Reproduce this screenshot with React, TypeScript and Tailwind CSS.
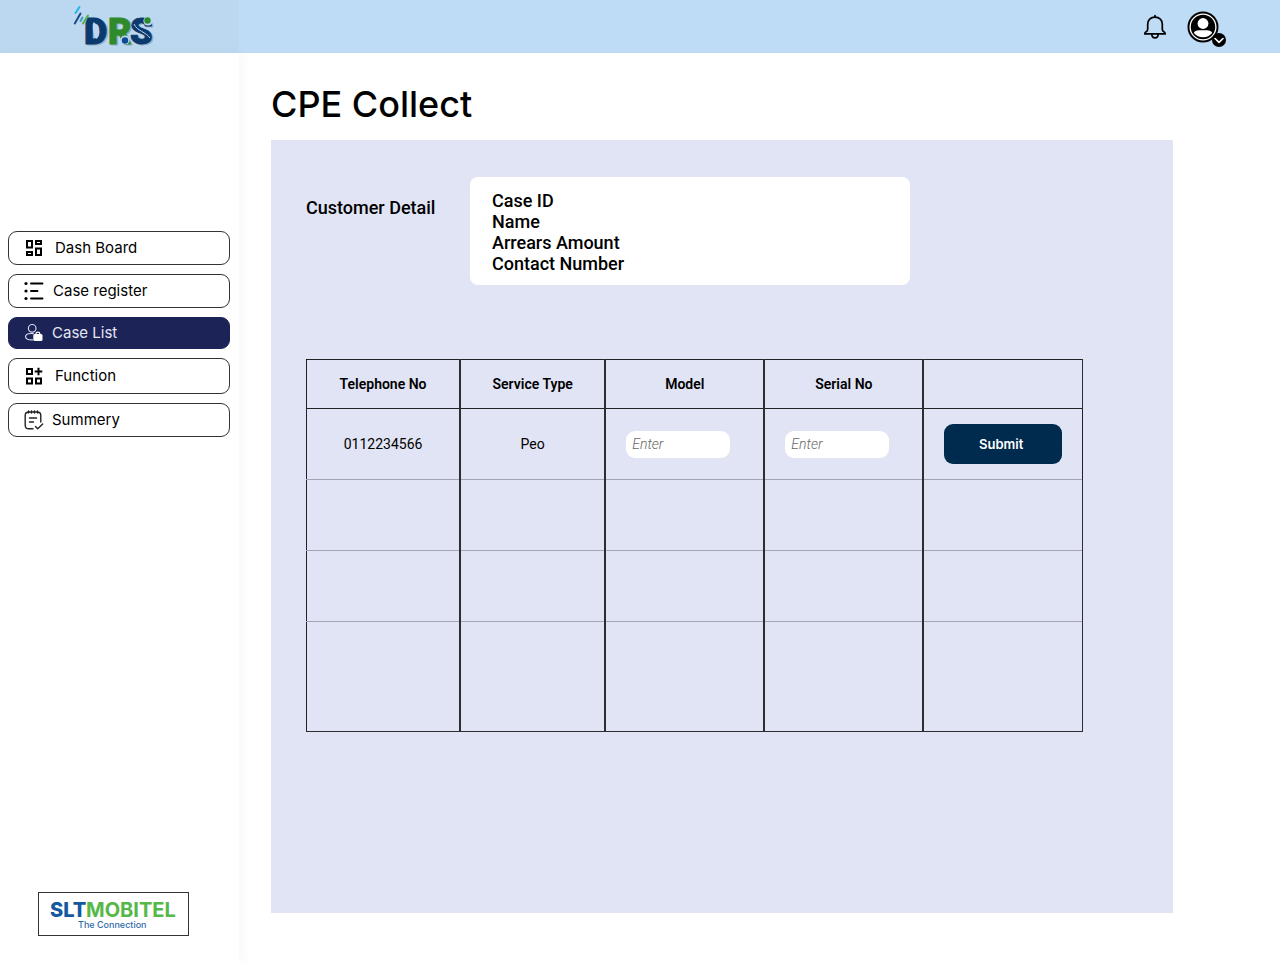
import type { ReactNode } from "react";

function BrandLogo() {
  return (
    <svg width="92" height="53" viewBox="0 0 92 53" role="img" aria-label="DRS">
      <g fontFamily="Roboto, 'Liberation Sans', sans-serif" fontWeight="900" fontSize="36" strokeWidth="1" strokeLinejoin="round">
        <g fill="#8ba0b3" stroke="#8ba0b3" opacity="0.7">
          <text x="12.500" y="45">D</text>
          <text x="36.500" y="45">R</text>
          <text x="58.500" y="45">S</text>
        </g>
        <text x="11" y="43.500" fill="#0b3a6e" stroke="#0b3a6e">D</text>
        <text x="35" y="43.500" fill="#2f8a2c" stroke="#2f8a2c">R</text>
        <text x="57" y="43.500" fill="#0b3a6e" stroke="#0b3a6e">S</text>
      </g>
      <path d="M20.500 22c6 4 8 12 3 17-2-4-5-9-3-17Z" fill="#bcd8f0" />
      <path d="M9.500 14h6.500l-3.500 8.500-3 2Z" fill="#bcd8f0" />
      <path d="M61 24c3 7 12 8 16 14" stroke="#bcd8f0" strokeWidth="1" fill="none" />
      <circle cx="52" cy="40" r="4.600" fill="#bcd8f0" />
      <circle cx="52" cy="40.500" r="3.200" fill="#0b4a94" />
      <circle cx="75" cy="21" r="4.600" fill="#bcd8f0" />
      <circle cx="74.500" cy="20.500" r="3.200" fill="#2f8a2c" />
      <g strokeWidth="2" strokeLinecap="round" fill="none">
        <path d="M2.500 13 6.500 7" stroke="#1db4ea" />
        <path d="M1.800 23.500 7.500 13.500" stroke="#1b4b86" />
        <path d="M7.500 21 9.500 17.500" stroke="#3fa0c8" />
        <path d="M10 23.500 15 15.500" stroke="#58ad4b" />
      </g>
    </svg>
  );
}

function BellIcon() {
  return (
    <svg width="24" height="26" viewBox="0 0 24 26" fill="none" stroke="#000" strokeWidth="1.700" strokeLinejoin="round" strokeLinecap="round">
      <path d="M12 1.500v1.700" />
      <path d="M12 3.200c-4.500 0-7.300 3-7.300 7v5c0 1.300-.6 2-1.600 2.600-.9.500-1.300 1-1.300 2.100h20.400c0-1.100-.4-1.600-1.300-2.100-1-.6-1.600-1.300-1.600-2.600v-5c0-4-2.800-7-7.300-7Z" />
      <path d="M8.800 20c0 2.400 1.300 3.900 3.200 3.900s3.200-1.500 3.200-3.900" />
    </svg>
  );
}

function AccountIcon() {
  return (
    <svg width="40" height="38" viewBox="0 0 40 38">
      <circle cx="16" cy="17" r="15.500" fill="#000" />
      <circle cx="16" cy="17" r="12.900" fill="none" stroke="#fff" strokeWidth="1.300" />
      <circle cx="16" cy="13.500" r="5.400" fill="#fff" />
      <path d="M6.800 23c.6-1.800 2.700-2.700 5-2.700h8.400c2.300 0 4.400.9 5 2.700a12 12 0 0 1-18.400 0Z" fill="#fff" />
      <circle cx="32" cy="30" r="7" fill="#000" />
      <path d="m28 28.500 4 3.800 4-3.800" fill="none" stroke="#fff" strokeWidth="1.600" strokeLinecap="round" strokeLinejoin="round" />
    </svg>
  );
}

function DashboardIcon() {
  return (
    <svg width="20" height="20" viewBox="0 0 20 20" fill="none" stroke="#000" strokeWidth="2">
      <path d="M3 3h5v6.500H3zM12 3h5v3h-5zM12 10.500h5V17h-5zM3 14h5v3H3z" />
    </svg>
  );
}

function ListIcon() {
  return (
    <svg width="20" height="20" viewBox="0 0 20 20" stroke="#000" strokeWidth="1.900" strokeLinecap="round">
      <path d="M7 2.500h11.500M7 10h6.500M7 17.500h11.500" />
      <g stroke="none">
        <circle cx="2" cy="2.500" r="1.600" />
        <circle cx="2" cy="10" r="1.600" />
        <circle cx="2" cy="17.500" r="1.600" />
      </g>
    </svg>
  );
}

function UserCaseIcon() {
  return (
    <svg width="20" height="20" viewBox="0 0 20 20" fill="none" stroke="#d5d7ee" strokeWidth="1.200">
      <circle cx="8.200" cy="5.300" r="3.800" />
      <path d="M8.500 16.800c-4 .2-7-.7-7-3 0-2 2.200-3.300 5.500-3.300 1 0 1.700.1 2.300.2" strokeLinecap="round" />
      <rect x="9.300" y="11" width="9.200" height="7" rx="1.500" fill="#fff" stroke="none" />
      <path d="M12 11.200v-.8c0-.8.6-1.200 1.900-1.200s1.900.4 1.900 1.200v.8" stroke="#fff" />
    </svg>
  );
}

function FunctionIcon() {
  return (
    <svg width="20" height="20" viewBox="0 0 20 20" fill="none" stroke="#000" strokeWidth="2">
      <path d="M3 3h5v5H3zM3 12.500h5v5H3zM12 12.500h5v5h-5zM14.500 1.700v7.600M10.700 5.500h7.600" />
    </svg>
  );
}

function NotesIcon() {
  return (
    <svg width="20" height="20" viewBox="0 0 20 20" fill="none" stroke="#222" strokeWidth="1.400" strokeLinecap="round" strokeLinejoin="round">
      <path d="M9 18.800H5c-2.600 0-3.800-1.200-3.800-3.800V5.500C1.200 3 2.400 2 5 2h8c2.600 0 3.800 1 3.800 3.500V12" />
      <path d="M4.500 1v2M7.500 1v2M10.500 1v2M13.500 1v2M5.500 8h7M5.500 12h4" />
      <path d="m11.500 16.500 2.200 2.200 5-4.700" />
    </svg>
  );
}

type NavItem = {
  label: string;
  icon: ReactNode;
  frame: string;
  active?: boolean;
};

const navItems: NavItem[] = [
  { label: "Dash Board", icon: <DashboardIcon />, frame: "h-[34px] gap-[11px] border-black/80 text-black" },
  { label: "Case register", icon: <ListIcon />, frame: "h-[34px] gap-[9px] border-black/80 text-black" },
  { label: "Case List", icon: <UserCaseIcon />, frame: "h-8 gap-2 border-[#1c2357] bg-[#1c2357] text-[#e6e7f3]", active: true },
  { label: "Function", icon: <FunctionIcon />, frame: "h-9 gap-[11px] border-black/80 text-black" },
  { label: "Summery", icon: <NotesIcon />, frame: "h-[34px] gap-2 border-black/80 text-black" },
];

const customerFields = ["Case ID", "Name", "Arrears Amount", "Contact Number"];
const headings = ["Telephone No", "Service Type", "Model", "Serial No", ""];
const emptyRows = ["h-[71px]", "h-[71px]", "h-[110px]"];

function EntryInput({ label }: { label: string }) {
  return (
    <input
      type="text"
      aria-label={label}
      placeholder="Enter"
      className="block h-[27px] w-[104px] rounded-[9px] bg-white px-[6px] text-sm text-black outline-none placeholder:font-light placeholder:text-[#666] placeholder:italic"
    />
  );
}

function Sidebar() {
  return (
    <aside className="flex w-[239px] shrink-0 flex-col bg-white px-2 pt-[178px] pb-[27px] shadow-[4px_0_12px_rgba(0,0,0,0.03)]">
      <nav aria-label="Main" className="flex flex-col gap-[9px] pr-px font-[Inter,sans-serif] text-[15px]">
        {navItems.map((item) => (
          <a
            key={item.label}
            href="#"
            aria-current={item.active ? "page" : undefined}
            className={`flex items-center rounded-[9px] border pl-[15px] ${item.frame}`}
          >
            {item.icon}
            {item.label}
          </a>
        ))}
      </nav>
      <div className="mt-auto ml-[30px] flex h-11 w-[151px] items-center justify-center border border-black/80">
        <svg width="136" height="40" viewBox="0 0 136 40" role="img" aria-label="SLT Mobitel, The Connection">
          <g fontFamily="Inter, sans-serif" fontWeight="800" fontSize="20">
            <text x="4" y="23" fill="#1459a0">SLT</text>
            <text x="40" y="23" fill="#55b948" fontWeight="700">MOBITEL</text>
          </g>
          <text x="32" y="34" fill="#2f6aa8" fontFamily="Inter, sans-serif" fontWeight="500" fontSize="9">The Connection</text>
        </svg>
      </div>
    </aside>
  );
}

function CaseTable() {
  return (
    <table className="w-full table-fixed border-collapse border border-black/85 text-center text-sm text-black">
      <colgroup>
        <col className="w-[19.800%]" />
        <col className="w-[18.700%]" />
        <col className="w-[20.500%]" />
        <col className="w-[20.500%]" />
        <col className="w-[20.500%]" />
      </colgroup>
      <thead>
        <tr className="h-[49px] border-b border-black/85">
          {headings.map((heading, i) => (
            <th key={i} scope="col" className="border-r-2 border-black/80 font-semibold last:border-r">
              {heading}
            </th>
          ))}
        </tr>
      </thead>
      <tbody>
        <tr className="h-[71px] border-b border-b-[#a3a5b4]">
          <td className="border-r-2 border-r-black/80">0112234566</td>
          <td className="border-r-2 border-r-black/80">Peo</td>
          <td className="border-r-2 border-r-black/80 pl-5"><EntryInput label="Model" /></td>
          <td className="border-r-2 border-r-black/80 pl-5"><EntryInput label="Serial No" /></td>
          <td className="px-5">
            <button type="button" className="h-10 w-full rounded-[9px] bg-[#002b4f] pr-1 font-[Inter,sans-serif] text-[13px] font-semibold text-white">
              Submit
            </button>
          </td>
        </tr>
        {emptyRows.map((height, r) => (
          <tr key={r} className={`${height} border-b border-b-[#a3a5b4] last:border-b-black/80`}>
            {headings.map((_, c) => (
              <td key={c} className="border-r-2 border-r-black/80 last:border-r" />
            ))}
          </tr>
        ))}
      </tbody>
    </table>
  );
}

export default function App() {
  return (
    <div className="flex min-h-screen flex-col bg-white font-[Roboto,sans-serif] text-black">
      <header className="flex h-[53px] shrink-0 bg-[#bfdcf6]">
        <div className="flex w-[239px] shrink-0 items-center bg-[#bcd8f0] pl-[73px]">
          <BrandLogo />
        </div>
        <div className="flex flex-1 items-center justify-end gap-5 pr-[53px]">
          <button type="button" aria-label="Notifications"><BellIcon /></button>
          <button type="button" aria-label="Account" className="pt-1"><AccountIcon /></button>
        </div>
      </header>
      <div className="flex flex-1">
        <Sidebar />
        <main className="flex min-w-0 flex-1 flex-col pt-[27px] pr-[107px] pb-[50px] pl-8">
          <h1 className="mb-3 font-[Inter,sans-serif] text-4xl leading-[48px] font-medium">CPE Collect</h1>
          <section className="flex-1 bg-[#e1e4f4] pt-[37px] pr-[90px] pl-[35px]">
            <div className="flex text-lg font-medium">
              <h2 className="w-[164px] shrink-0 pt-[17px]">Customer Detail</h2>
              <ul className="h-[108px] w-full max-w-[440px] rounded-lg bg-white pt-[13px] pl-[22px] leading-[21px]">
                {customerFields.map((field) => (
                  <li key={field}>{field}</li>
                ))}
              </ul>
            </div>
            <div className="mt-[74px]">
              <CaseTable />
            </div>
          </section>
        </main>
      </div>
    </div>
  );
}
